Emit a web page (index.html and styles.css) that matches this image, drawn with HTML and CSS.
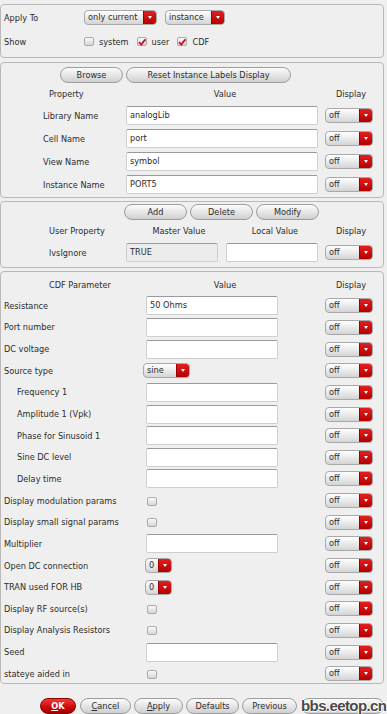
FILE: index.html
```html
<!DOCTYPE html>
<html lang="en">
<head>
    <meta charset="UTF-8">
    <meta name="viewport" content="width=device-width, initial-scale=1.0">
    <title>Edit Object Properties</title>
    <link rel="stylesheet" href="styles.css">
</head>
<body>
<div class="dialog">

    <!-- apply to / show -->
    <div class="panel panel-apply">
        <div class="apply-row">
            <span class="apply-label">Apply To</span>
            <div class="combo w-current"><span class="combo-text">only current</span><span class="combo-btn"></span></div>
            <div class="combo w-instance"><span class="combo-text">instance</span><span class="combo-btn"></span></div>
        </div>
        <div class="apply-row show-row">
            <span class="apply-label">Show</span>
            <span class="check"></span><span class="check-text">system</span>
            <span class="check on"><svg viewBox="0 0 10 10"><path d="M2 5 L4.2 7.6 L8.4 2.4"/></svg></span><span class="check-text">user</span>
            <span class="check on"><svg viewBox="0 0 10 10"><path d="M2 5 L4.2 7.6 L8.4 2.4"/></svg></span><span class="check-text">CDF</span>
        </div>
    </div>

    <!-- instance properties -->
    <div class="panel panel-props">
        <div class="btn-row props-btns">
            <span class="btn w-browse">Browse</span>
            <span class="btn w-reset">Reset Instance Labels Display</span>
        </div>
        <div class="grid-props head">
            <span class="head-prop">Property</span>
            <span class="head-center">Value</span>
            <span></span>
            <span class="head-display">Display</span>
        </div>
        <div class="grid-props row-props">
            <span class="prop-label">Library Name</span>
            <span class="field">analogLib</span>
            <span></span>
            <div class="combo w-off"><span class="combo-text">off</span><span class="combo-btn"></span></div>
        </div>
        <div class="grid-props row-props">
            <span class="prop-label">Cell Name</span>
            <span class="field">port</span>
            <span></span>
            <div class="combo w-off"><span class="combo-text">off</span><span class="combo-btn"></span></div>
        </div>
        <div class="grid-props row-props">
            <span class="prop-label">View Name</span>
            <span class="field">symbol</span>
            <span></span>
            <div class="combo w-off"><span class="combo-text">off</span><span class="combo-btn"></span></div>
        </div>
        <div class="grid-props row-props">
            <span class="prop-label">Instance Name</span>
            <span class="field">PORT5</span>
            <span></span>
            <div class="combo w-off"><span class="combo-text">off</span><span class="combo-btn"></span></div>
        </div>
    </div>

    <!-- user properties -->
    <div class="panel panel-user">
        <div class="btn-row user-btns">
            <span class="btn w-small">Add</span>
            <span class="btn w-small">Delete</span>
            <span class="btn w-small">Modify</span>
        </div>
        <div class="grid-user head">
            <span class="head-prop">User Property</span>
            <span class="head-center">Master Value</span>
            <span class="head-center">Local Value</span>
            <span class="head-display">Display</span>
        </div>
        <div class="grid-user row-user">
            <span class="user-label">lvsIgnore</span>
            <span class="field field-ro">TRUE</span>
            <span class="field"></span>
            <div class="combo w-off"><span class="combo-text">off</span><span class="combo-btn"></span></div>
        </div>
    </div>

    <!-- CDF parameters -->
    <div class="panel panel-cdf">
        <div class="grid-props head head-cdf">
            <span class="head-prop">CDF Parameter</span>
            <span class="head-center">Value</span>
            <span></span>
            <span class="head-display">Display</span>
        </div>
        <div class="cdf-rows">
            <span class="cdf-label">Resistance</span><span class="field">50 Ohms</span><span></span>
            <div class="combo w-off"><span class="combo-text">off</span><span class="combo-btn"></span></div>

            <span class="cdf-label">Port number</span><span class="field"></span><span></span>
            <div class="combo w-off"><span class="combo-text">off</span><span class="combo-btn"></span></div>

            <span class="cdf-label">DC voltage</span><span class="field"></span><span></span>
            <div class="combo w-off"><span class="combo-text">off</span><span class="combo-btn"></span></div>

            <span class="cdf-label">Source type</span>
            <span><div class="combo w-sine"><span class="combo-text">sine</span><span class="combo-btn"></span></div></span><span></span>
            <div class="combo w-off"><span class="combo-text">off</span><span class="combo-btn"></span></div>

            <span class="cdf-label sub">Frequency 1</span><span class="field"></span><span></span>
            <div class="combo w-off"><span class="combo-text">off</span><span class="combo-btn"></span></div>

            <span class="cdf-label sub">Amplitude 1 (Vpk)</span><span class="field"></span><span></span>
            <div class="combo w-off"><span class="combo-text">off</span><span class="combo-btn"></span></div>

            <span class="cdf-label sub">Phase for Sinusoid 1</span><span class="field"></span><span></span>
            <div class="combo w-off"><span class="combo-text">off</span><span class="combo-btn"></span></div>

            <span class="cdf-label sub">Sine DC level</span><span class="field"></span><span></span>
            <div class="combo w-off"><span class="combo-text">off</span><span class="combo-btn"></span></div>

            <span class="cdf-label sub">Delay time</span><span class="field"></span><span></span>
            <div class="combo w-off"><span class="combo-text">off</span><span class="combo-btn"></span></div>

            <span class="cdf-label">Display modulation params</span><span><span class="check cdf-check"></span></span><span></span>
            <div class="combo w-off"><span class="combo-text">off</span><span class="combo-btn"></span></div>

            <span class="cdf-label">Display small signal params</span><span><span class="check cdf-check"></span></span><span></span>
            <div class="combo w-off"><span class="combo-text">off</span><span class="combo-btn"></span></div>

            <span class="cdf-label">Multiplier</span><span class="field"></span><span></span>
            <div class="combo w-off"><span class="combo-text">off</span><span class="combo-btn"></span></div>

            <span class="cdf-label">Open DC connection</span>
            <span><div class="combo w-zero"><span class="combo-text">0</span><span class="combo-btn"></span></div></span><span></span>
            <div class="combo w-off"><span class="combo-text">off</span><span class="combo-btn"></span></div>

            <span class="cdf-label">TRAN used FOR HB</span>
            <span><div class="combo w-zero"><span class="combo-text">0</span><span class="combo-btn"></span></div></span><span></span>
            <div class="combo w-off"><span class="combo-text">off</span><span class="combo-btn"></span></div>

            <span class="cdf-label">Display RF source(s)</span><span><span class="check cdf-check"></span></span><span></span>
            <div class="combo w-off"><span class="combo-text">off</span><span class="combo-btn"></span></div>

            <span class="cdf-label">Display Analysis Resistors</span><span><span class="check cdf-check"></span></span><span></span>
            <div class="combo w-off"><span class="combo-text">off</span><span class="combo-btn"></span></div>

            <span class="cdf-label">Seed</span><span class="field"></span><span></span>
            <div class="combo w-off"><span class="combo-text">off</span><span class="combo-btn"></span></div>

            <span class="cdf-label">stateye aided in</span><span><span class="check cdf-check"></span></span><span></span>
            <div class="combo w-off"><span class="combo-text">off</span><span class="combo-btn"></span></div>
        </div>
    </div>

    <!-- dialog buttons -->
    <div class="btn-row footer">
        <span class="btn btn-ok w-ok"><u>O</u>K</span>
        <span class="btn w-cancel"><u>C</u>ancel</span>
        <span class="btn w-apply"><u>A</u>pply</span>
        <span class="btn w-defaults">Defaults</span>
        <span class="btn w-previous">Previous</span>
        <span class="btn w-next"></span>
        <span class="watermark">bbs.eetop.cn</span>
    </div>
</div>
</body>
</html>
```

FILE: styles.css
```css
body {
    margin: 0;
    background-color: #efefef;
    font-family: 'DejaVu Sans', sans-serif;
    font-size: 8.2px;
    color: #2c2c2c;
    overflow: hidden;
}
.dialog {
    width: 384px;
    height: 714px;
    position: relative;
}
.panel {
    border: 1px solid #b9b9b9;
    border-radius: 4px;
    box-sizing: border-box;
}
.panel-apply {
    margin-top: 4px;
    height: 54px;
    padding-top: 1px;
}
.panel-props {
    margin-top: 4px;
    height: 136px;
}
.panel-user {
    margin-top: 3px;
    height: 67px;
}
.panel-cdf {
    margin-top: 3px;
    height: 413px;
}

/* apply to */
.apply-row {
    display: flex;
    align-items: center;
    height: 23px;
}
.show-row {
    height: 25px;
}
.apply-label {
    width: 80px;
    padding-left: 3px;
}
.w-current { width: 73px; }
.w-instance { width: 60px; margin-left: 8px; }
.check-text {
    margin-left: 5px;
    margin-right: 8px;
}

/* combo box */
.combo {
    display: flex;
    height: 15px;
    box-sizing: border-box;
    border: 1px solid #a9a9a9;
    border-radius: 4px;
    background: linear-gradient(#ffffff, #e6e6e6 60%, #d4d4d4);
    overflow: hidden;
}
.combo-text {
    flex: 1;
    padding-left: 3px;
    line-height: 13px;
    white-space: nowrap;
}
.combo-btn {
    width: 12px;
    background: linear-gradient(#e41f1f, #b30000);
    border-left: 1px solid #9a0000;
    display: flex;
    align-items: center;
    justify-content: center;
}
.combo-btn::after {
    content: '';
    border-left: 2.5px solid transparent;
    border-right: 2.5px solid transparent;
    border-top: 3px solid #fff;
}
.w-off { width: 48px; }
.w-sine { width: 47px; margin-left: -3px; }
.w-zero { width: 27px; margin-left: -1px; }

/* check box */
.check {
    display: inline-block;
    width: 10px;
    height: 9px;
    box-sizing: border-box;
    border: 1px solid #aaa;
    border-radius: 2px;
    background: linear-gradient(#fafafa, #d6d6d6);
}
.check svg {
    display: block;
    width: 10px;
    height: 10px;
    margin: -1px 0 0 -1px;
}
.check svg path {
    fill: none;
    stroke: #c8102e;
    stroke-width: 1.8;
}
.cdf-check {
    margin-left: 1px;
    vertical-align: middle;
}

/* push buttons */
.btn-row {
    display: flex;
    gap: 3px;
}
.btn {
    height: 16px;
    box-sizing: border-box;
    border: 1px solid #9d9d9d;
    border-radius: 8px;
    background: linear-gradient(#fbfbfb, #e4e4e4 55%, #cfcfcf);
    text-align: center;
    line-height: 14px;
}
.btn u {
    text-decoration: underline;
}
.props-btns {
    padding: 4px 0 0 59px;
}
.w-browse { width: 63px; }
.w-reset { width: 165px; }
.user-btns {
    padding: 2px 0 0 123px;
}
.w-small { width: 63px; }

/* property grids */
.grid-props {
    display: grid;
    grid-template-columns: 125px 192px 7px 48px;
    align-items: center;
}
.grid-user {
    display: grid;
    grid-template-columns: 125px 92px 8px 92px 7px 48px;
    align-items: center;
}
.grid-user .head-center:nth-child(3) {
    grid-column: 4;
}
.grid-user .head-center:nth-child(2) {
    grid-column: 2 / 4;
}
.grid-user .head-display {
    grid-column: 6;
}
.grid-user .field:nth-child(3) {
    grid-column: 4;
}
.grid-user .combo {
    grid-column: 6;
}
.head {
    height: 21px;
}
.head-prop {
    padding-left: 48px;
}
.head-center {
    text-align: center;
    padding-left: 6px;
}
.head-display {
    text-align: center;
    padding-left: 4px;
}
.row-props {
    height: 23px;
}
.prop-label {
    padding-left: 42px;
}
.row-user {
    height: 23px;
}
.user-label {
    padding-left: 48px;
}
.field {
    display: block;
    height: 19px;
    box-sizing: border-box;
    background: #fff;
    border: 1px solid #cfcfcf;
    border-top-color: #9a9a9a;
    border-radius: 2px;
    padding-left: 3px;
    line-height: 17px;
}
.field-ro {
    background: #ececec;
}

/* cdf parameters */
.head-cdf {
    margin-top: 2px;
}
.cdf-rows {
    display: grid;
    grid-template-columns: 145px 132px 47px 48px;
    grid-auto-rows: 21.65px;
    align-items: center;
}
.cdf-label {
    padding-left: 3px;
    white-space: nowrap;
}
.cdf-label.sub {
    padding-left: 16px;
}

/* footer */
.footer {
    padding: 14px 0 0 40px;
}
.btn-ok {
    background: linear-gradient(#f23a3a, #cc0d0d 55%, #a80000);
    border-color: #8c0000;
    color: #fff;
    font-weight: bold;
}
.w-ok { width: 36px; }
.w-cancel { width: 52px; margin-left: 1px; }
.w-apply { width: 49px; }
.w-defaults { width: 54px; }
.w-previous { width: 55px; }
.w-next { width: 84px; margin-left: 1px; }
.watermark {
    position: absolute;
    left: 301px;
    top: 693px;
    font-family: 'Liberation Sans', sans-serif;
    font-weight: bold;
    font-size: 15px;
    letter-spacing: -0.6px;
    color: #4a4a4a;
    text-shadow: 1px 0 #fff, -1px 0 #fff, 0 1px #fff, 0 -1px #fff;
}
```
